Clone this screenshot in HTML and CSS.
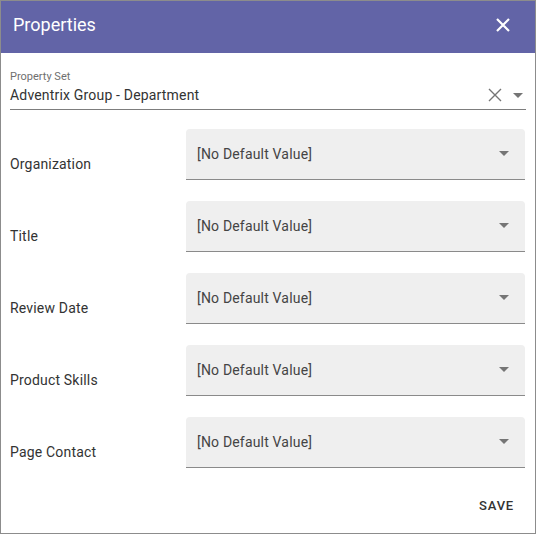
FILE: index.html
```html
<!DOCTYPE html>
<html>
<head>
<meta charset="utf-8">
<link rel="stylesheet" href="styles.css">
</head>
<body>
<div class="dialog">
  <div class="header">
    <span class="title">Properties</span>
    <svg class="close" width="16" height="16" viewBox="0 0 16 16"><path d="M2 2L14 14M14 2L2 14" stroke="#fff" stroke-width="2.2" fill="none"/></svg>
  </div>
  <div class="content">
    <div class="propset">
      <div class="ps-label">Property Set</div>
      <div class="ps-row">
        <span class="ps-value">Adventrix Group - Department</span>
        <svg class="clear" width="14" height="14" viewBox="0 0 14 14"><path d="M1 1L13 13M13 1L1 13" stroke="#757575" stroke-width="1.4" fill="none"/></svg>
        <span class="arrow"></span>
      </div>
    </div>
    <div class="rows">
      <div class="row"><span class="label">Organization</span><div class="field"><span>[No Default Value]</span><span class="arrow"></span></div></div>
      <div class="row"><span class="label">Title</span><div class="field"><span>[No Default Value]</span><span class="arrow"></span></div></div>
      <div class="row"><span class="label">Review Date</span><div class="field"><span>[No Default Value]</span><span class="arrow"></span></div></div>
      <div class="row"><span class="label">Product Skills</span><div class="field"><span>[No Default Value]</span><span class="arrow"></span></div></div>
      <div class="row"><span class="label">Page Contact</span><div class="field"><span>[No Default Value]</span><span class="arrow"></span></div></div>
    </div>
    <div class="actions"><button class="save">SAVE</button></div>
  </div>
</div>
</body>
</html>
```

FILE: styles.css
```css
* { box-sizing: border-box; }
html, body { margin: 0; padding: 0; background: #fff; }
body { font-family: Roboto, "Liberation Sans", sans-serif; }
.dialog {
  width: 536px;
  height: 534px;
  border: 1px solid #8c8c8c;
  display: flex;
  flex-direction: column;
  background: #fff;
}
.header {
  height: 52px;
  background: #6264a7;
  display: flex;
  align-items: center;
  justify-content: space-between;
  padding: 0 24px 5px 12px;
  flex: none;
}
.title { color: #fff; font-size: 18px; font-weight: 400; }
.close { display: block; }
.content { flex: 1; display: flex; flex-direction: column; padding: 0 9px 0 9px; }
.propset { margin-top: 17px; border-bottom: 1px solid #7d7d7d; padding-bottom: 4px; }
.ps-label { font-size: 11px; color: #6f6f6f; line-height: 14px; }
.ps-row { display: flex; align-items: center; height: 20px; margin-top: 1px; }
.ps-value { flex: 1; font-size: 14px; color: #333; line-height: 20px; letter-spacing: 0.18px; }
.clear { margin-right: 11px; }
.arrow {
  width: 0; height: 0;
  border-left: 5px solid transparent;
  border-right: 5px solid transparent;
  border-top: 5px solid #757575;
  margin-right: 3px;
}
.rows { display: flex; flex-direction: column; gap: 21px; margin-top: 19px; }
.row { display: flex; align-items: flex-end; height: 51px; }
.label { width: 176px; font-size: 14px; color: #333; padding-bottom: 8px; letter-spacing: 0.18px; }
.field {
  flex: 1;
  height: 51px;
  background: #efefef;
  border-radius: 4px 4px 0 0;
  border-bottom: 1px solid #8a8a8a;
  display: flex;
  align-items: center;
  justify-content: space-between;
  padding: 0 14px 1px 11px;
  font-size: 14px;
  color: #444;
  letter-spacing: 0.18px;
  margin-right: 1px;
}
.field .arrow { margin-right: 2px; }
.actions { display: flex; justify-content: flex-end; margin-top: 24px; }
.save {
  background: none; border: none;
  font-family: Roboto, "Liberation Sans", sans-serif;
  font-size: 13px; font-weight: 500; letter-spacing: 0.8px;
  color: #333; padding: 6px 12px 6px 10px;
}
```
